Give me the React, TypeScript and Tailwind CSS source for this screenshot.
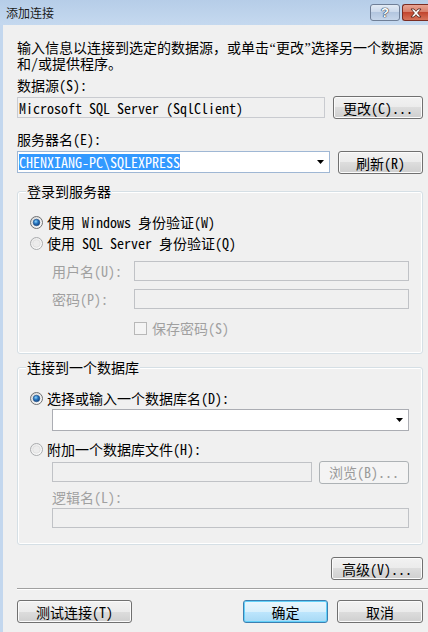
import React from "react";

const font = "font-['Noto_Sans_Mono_CJK_SC','Noto_Sans_CJK_SC','Liberation_Mono',monospace] text-[14px] leading-4";

const btn =
  "h-[23px] flex items-center justify-center rounded-[3px] border border-[#707070] bg-[linear-gradient(#f2f2f2_0%,#ebebeb_50%,#dddddd_50%,#cfcfcf_100%)] shadow-[inset_0_0_0_1px_#fbfbfb] text-black";

const btnDisabled =
  "h-[23px] flex items-center justify-center rounded-[3px] border border-[#adb2b5] bg-[#f4f4f4] text-[#9a9a9a]";

const btnDefault =
  "h-[23px] flex items-center justify-center rounded-[3px] border border-[#3c7fb1] bg-[linear-gradient(#eaf6fd_0%,#d9f0fc_50%,#bee6fd_50%,#a7d9f5_100%)] shadow-[inset_0_0_0_1px_#63d1f9] text-black";

const quote = "inline-block w-[7px] text-center font-['Liberation_Serif',serif]";

function Radio({ checked }: { checked?: boolean }) {
  return (
    <svg width="13" height="13" viewBox="0 0 13 13" className="shrink-0">
      <defs>
        <linearGradient id={checked ? "rOn" : "rOff"} x1="0" y1="0" x2="1" y2="1">
          <stop offset="0" stopColor={checked ? "#d4d4d4" : "#e8e8e8"} />
          <stop offset="1" stopColor="#ffffff" />
        </linearGradient>
        <radialGradient id="dot" cx="0.4" cy="0.35" r="0.7">
          <stop offset="0" stopColor="#8fd6fb" />
          <stop offset="0.45" stopColor="#2a78c2" />
          <stop offset="1" stopColor="#0e3d78" />
        </radialGradient>
      </defs>
      <circle cx="6.5" cy="6.5" r="6" fill={`url(#${checked ? "rOn" : "rOff"})`} stroke={checked ? "#6f7072" : "#a9abad"} />
      {checked ? (
        <circle cx="6.5" cy="6.5" r="3.3" fill="url(#dot)" stroke="#1c4e86" strokeWidth="0.6" />
      ) : (
        <circle cx="6.5" cy="6.5" r="3.8" fill="#ececec" stroke="#d6d6d6" strokeWidth="0.6" />
      )}
    </svg>
  );
}

function Arrow() {
  return (
    <svg width="7" height="4" viewBox="0 0 7 4">
      <polygon points="0,0 7,0 3.5,4" fill="#000" />
    </svg>
  );
}

function Group({ title, h, children }: { title: string; h: string; children: React.ReactNode }) {
  return (
    <div className={`relative rounded-[3px] border border-[#d5dfe5] shadow-[inset_0_0_0_1px_#fff] ${h}`}>
      <span className="absolute -top-[9px] left-[8px] bg-[#f0f0f0] px-[1px]">{title}</span>
      {children}
    </div>
  );
}

export default function App() {
  return (
    <div className={`w-[428px] h-[632px] overflow-hidden flex flex-col bg-[#c3d7ee] ${font}`}>
      {/* title bar */}
      <div className="h-[25px] shrink-0 flex items-center bg-[linear-gradient(#b6cde8,#c5d9ef)]">
        <span className="ml-[6px] text-[12px] text-[#1a1a1a] font-['Noto_Sans_CJK_SC',sans-serif]">添加连接</span>
        <div className="ml-auto flex items-start self-start mt-[4px] gap-[2px]">
          <div className="w-[30px] h-[17px] rounded-[3px] border border-[#6f7f97] bg-[linear-gradient(#e3ebf5_0%,#c9d7ea_50%,#b3c6df_50%,#c6d6ea_100%)] flex items-center justify-center">
            <span className="text-[13px] font-bold text-white leading-none font-['Liberation_Sans',sans-serif] [text-shadow:0_0_1px_#1f2f48,0_0_1px_#1f2f48,0_0_1px_#1f2f48]">?</span>
          </div>
          <div className="w-[26px] h-[17px] rounded-l-[3px] border border-r-0 border-[#7b2c22] bg-[linear-gradient(#e8a493_0%,#d67a66_50%,#c2452f_50%,#d7735a_100%)] flex items-center justify-center">
            <svg width="12" height="10" viewBox="0 0 12 10">
              <path d="M1 1 L4 1 L6 3.3 L8 1 L11 1 L7.6 5 L11 9 L8 9 L6 6.7 L4 9 L1 9 L4.4 5 Z" fill="#fff" stroke="#4a1a14" strokeWidth="0.8" strokeLinejoin="round" />
            </svg>
          </div>
        </div>
      </div>

      {/* client area */}
      <div className="flex-1 ml-[3px] bg-[#f0f0f0] flex flex-col pl-[14px] pr-[5px] pt-[14px] text-black">
        <div className="whitespace-nowrap h-4">
          输入信息以连接到选定的数据源，或单击<span className={quote}>“</span>更改<span className={quote}>”</span>选择另一个数据源
        </div>
        <div className="whitespace-nowrap h-4">和/或提供程序。</div>

        <div className="mt-[6px]">数据源(S):</div>
        <div className="mt-[3px] h-[23px] flex items-center gap-[8px]">
          <div className="w-[308px] h-[21px] border border-[#c9cbd0] bg-[#f0f0f0] flex items-center pl-[1px] whitespace-nowrap">
            Microsoft SQL Server (SqlClient)
          </div>
          <div className={`${btn} w-[90px]`}>更改(C)...</div>
        </div>

        <div className="mt-[12px]">服务器名(E):</div>
        <div className="mt-[4px] h-[23px] flex items-start gap-[8px]">
          <div className="w-[313px] h-[22px] border border-[#9fb7d4] bg-white flex items-center pl-[1px] pr-[5px]">
            <span className="bg-[#3399ff] text-white h-[16px] whitespace-nowrap">CHENXIANG-PC\SQLEXPRESS</span>
            <span className="ml-auto flex"><Arrow /></span>
          </div>
          <div className={`${btn} w-[85px]`}>刷新(R)</div>
        </div>

        {/* login group */}
        <div className="mt-[17px]">
          <Group title="登录到服务器" h="h-[163px]">
            <div className="pt-[22px] pl-[12px] pr-[13px] flex flex-col">
              <div className="h-4 flex items-center gap-[4px]">
                <Radio checked />
                <span>使用 Windows 身份验证(W)</span>
              </div>
              <div className="mt-[5px] h-4 flex items-center gap-[4px]">
                <Radio />
                <span>使用 SQL Server 身份验证(Q)</span>
              </div>
              <div className="mt-[10px] flex items-center pl-[22px] text-[#a0a0a0]">
                <span className="w-[82px]">用户名(U):</span>
                <div className="flex-1 h-[20px] border border-[#c0c2c6] bg-[#f0f0f0]" />
              </div>
              <div className="mt-[8px] flex items-center pl-[22px] text-[#a0a0a0]">
                <span className="w-[82px]">密码(P):</span>
                <div className="flex-1 h-[20px] border border-[#c0c2c6] bg-[#f0f0f0]" />
              </div>
              <div className="mt-[11px] h-4 flex items-center pl-[104px] gap-[5px] text-[#a0a0a0]">
                <div className="w-[13px] h-[13px] border border-[#b8b8b8] bg-[#f4f4f4]" />
                <span>保存密码(S)</span>
              </div>
            </div>
          </Group>
        </div>

        {/* database group */}
        <div className="mt-[13px]">
          <Group title="连接到一个数据库" h="h-[178px]">
            <div className="pt-[22px] pl-[12px] pr-[13px] flex flex-col">
              <div className="h-4 flex items-center gap-[4px]">
                <Radio checked />
                <span>选择或输入一个数据库名(D):</span>
              </div>
              <div className="mt-[3px] ml-[22px] h-[22px] border border-[#abadb3] bg-white flex items-center justify-end pr-[5px]">
                <Arrow />
              </div>
              <div className="mt-[10px] h-4 flex items-center gap-[4px]">
                <Radio />
                <span>附加一个数据库文件(H):</span>
              </div>
              <div className="mt-[4px] ml-[22px] h-[22px] flex items-center gap-[7px]">
                <div className="w-[260px] h-[20px] border border-[#c0c2c6] bg-[#f0f0f0]" />
                <div className={`${btnDisabled} flex-1`}>浏览(B)...</div>
              </div>
              <div className="mt-[6px] ml-[22px] text-[#a0a0a0]">逻辑名(L):</div>
              <div className="mt-[3px] ml-[22px] h-[20px] border border-[#c0c2c6] bg-[#f0f0f0]" />
            </div>
          </Group>
        </div>

        <div className="mt-[12px] flex justify-end">
          <div className={`${btn} w-[92px]`}>高级(V)...</div>
        </div>

        <div className="mt-[8px] -mr-[5px] border-t border-[#a0a0a0] border-b border-b-white" />

        <div className="mt-[10px] flex items-center">
          <div className={`${btn} w-[115px]`}>测试连接(T)</div>
          <div className={`${btnDefault} w-[85px] ml-auto`}>确定</div>
          <div className={`${btn} w-[86px] ml-[9px]`}>取消</div>
        </div>
      </div>
    </div>
  );
}
